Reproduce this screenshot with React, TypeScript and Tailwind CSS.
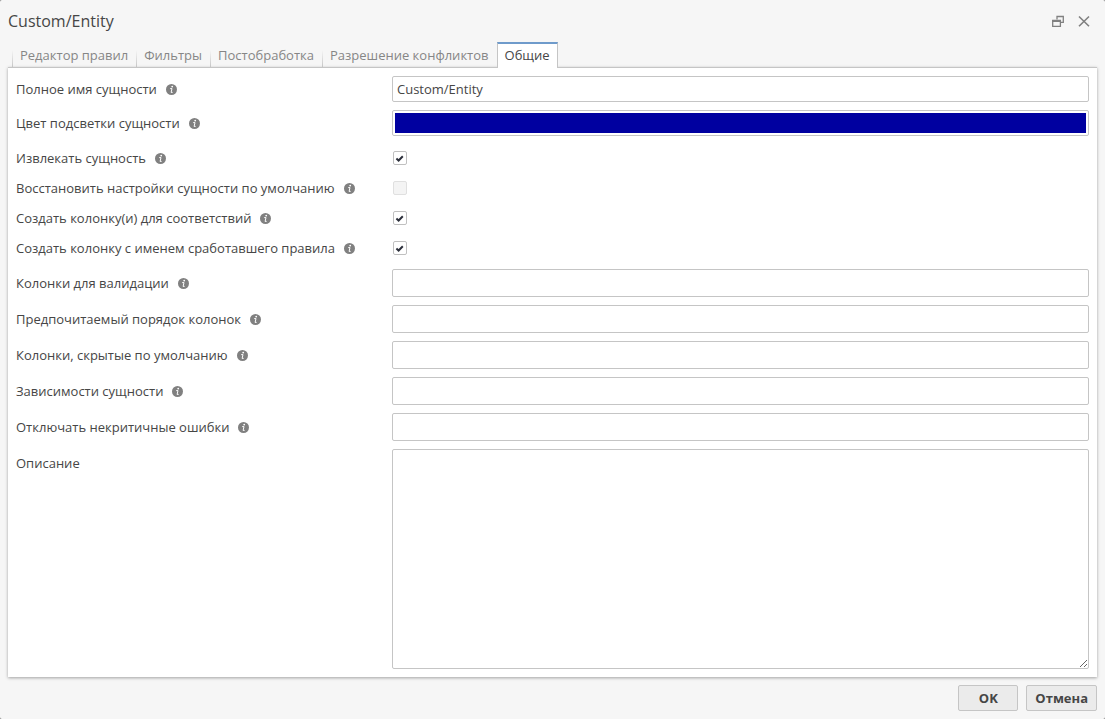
import { useState } from 'react';
import type { ReactNode } from 'react';

const tabs = [
  'Редактор правил',
  'Фильтры',
  'Постобработка',
  'Разрешение конфликтов',
  'Общие',
];

const checks = [
  { id: 'extract', label: 'Извлекать сущность', checked: true },
  {
    id: 'restore',
    label: 'Восстановить настройки сущности по умолчанию',
    checked: false,
    disabled: true,
  },
  { id: 'matches', label: 'Создать колонку(и) для соответствий', checked: true },
  {
    id: 'rule-name',
    label: 'Создать колонку с именем сработавшего правила',
    checked: true,
  },
];

const lists = [
  { id: 'validation', label: 'Колонки для валидации' },
  { id: 'order', label: 'Предпочитаемый порядок колонок' },
  { id: 'hidden', label: 'Колонки, скрытые по умолчанию' },
  { id: 'dependencies', label: 'Зависимости сущности' },
  { id: 'errors', label: 'Отключать некритичные ошибки' },
];

const field =
  'min-w-0 flex-1 rounded-xs border border-[#c5c5c5] bg-white outline-none focus:border-[#6f9bcb]';

function InfoIcon() {
  return (
    <svg viewBox="0 0 11 11" className="size-[11px] shrink-0" aria-hidden="true">
      <circle cx="5.5" cy="5.5" r="5.5" fill="#808080" />
      <circle cx="6.2" cy="2.6" r="0.9" fill="#fff" />
      <path
        d="M4.2 4.6H6L5.1 8.4H6.6"
        fill="none"
        stroke="#fff"
        strokeWidth="1"
        strokeLinejoin="round"
      />
    </svg>
  );
}

type RowProps = {
  id: string;
  label: string;
  info?: boolean;
  className?: string;
  children: ReactNode;
};

function Row({ id, label, info = true, className = 'items-center', children }: RowProps) {
  return (
    <div className={`flex ${className}`}>
      <div className="flex w-94 shrink-0 items-center gap-[9px]">
        <label htmlFor={id}>{label}</label>
        {info && <InfoIcon />}
      </div>
      {children}
    </div>
  );
}

type CheckboxProps = { id: string; checked: boolean; disabled?: boolean };

function Checkbox({ id, checked, disabled }: CheckboxProps) {
  return (
    <span className="ml-px grid size-3.5 place-items-center">
      <input
        id={id}
        type="checkbox"
        defaultChecked={checked}
        disabled={disabled}
        className="peer col-start-1 row-start-1 size-3.5 appearance-none rounded-xs border border-[#c0c0c0] bg-white disabled:border-[#e0e0e0] disabled:bg-[#f4f4f4]"
      />
      <svg
        viewBox="0 0 14 14"
        className="pointer-events-none invisible col-start-1 row-start-1 size-3.5 peer-checked:visible"
        aria-hidden="true"
      >
        <path d="M3.4 7.5L5.6 9.5L9.8 5.3" fill="none" stroke="#2b2f3a" strokeWidth="2" />
      </svg>
    </span>
  );
}

export default function App() {
  const [active, setActive] = useState('Общие');

  return (
    <div className="min-h-screen bg-[#808080]">
      <div className="flex min-h-screen flex-col rounded-xs bg-[#f6f6f6] px-2 pb-2 font-['Open_Sans',sans-serif] text-[13px] leading-5 text-[#464646]">
        <header className="flex h-[42px] items-center justify-between">
          <h1 className="text-base">Custom/Entity</h1>
          <div className="flex items-center gap-3.5 pr-[7px] text-[#808080]">
            <button type="button" aria-label="Восстановить">
              <svg viewBox="0 0 12 12" className="size-3" fill="none" stroke="currentColor">
                <path d="M5 4.5V1.5H11.3V7.3H9" strokeWidth="1.3" />
                <path d="M0.7 5.5H8.4V11.3H0.7Z" strokeWidth="1.3" />
                <path d="M0 6H9" strokeWidth="2" />
              </svg>
            </button>
            <button type="button" aria-label="Закрыть">
              <svg viewBox="0 0 12 12" className="size-3" fill="none" stroke="currentColor">
                <path d="M1 1.5L11 11.2M11 1.5L1 11.2" strokeWidth="1.6" />
              </svg>
            </button>
          </div>
        </header>

        <div role="tablist" className="z-10 -mb-px flex h-[26px] pl-1">
          {tabs.map((tab) =>
            tab === active ? (
              <button
                key={tab}
                type="button"
                role="tab"
                aria-selected="true"
                className="border-x border-t-2 border-x-[#c5c5c5] border-t-[#6f9bcb] bg-white px-[7px] pb-0.5"
              >
                {tab}
              </button>
            ) : (
              <button
                key={tab}
                type="button"
                role="tab"
                aria-selected="false"
                onClick={() => setActive(tab)}
                className="mb-px flex items-center pt-px pr-2 text-[#868686]"
              >
                <span className="mr-[7px] h-full w-px bg-linear-to-b from-transparent from-30% to-[#c5c5c5]" />
                {tab}
              </button>
            ),
          )}
        </div>

        <main className="flex flex-1 flex-col gap-2 border-t border-[#c5c5c5] bg-white p-2 shadow-[0_1px_3px_rgba(0,0,0,0.35)]">
          <Row id="name" label="Полное имя сущности">
            <input id="name" defaultValue="Custom/Entity" className={`${field} h-[26px] px-1`} />
          </Row>
          <Row id="color" label="Цвет подсветки сущности">
            <input
              id="color"
              type="color"
              defaultValue="#0000a0"
              className={`${field} h-[26px] appearance-none p-0.5 [&::-webkit-color-swatch]:rounded-none [&::-webkit-color-swatch]:border-0 [&::-webkit-color-swatch-wrapper]:p-0`}
            />
          </Row>
          <div className="flex flex-col gap-2.5 pt-1 pb-[3px]">
            {checks.map(({ id, label, checked, disabled }) => (
              <Row key={id} id={id} label={label}>
                <Checkbox id={id} checked={checked} disabled={disabled} />
              </Row>
            ))}
          </div>
          {lists.map(({ id, label }) => (
            <Row key={id} id={id} label={label}>
              <input id={id} className={`${field} h-7 px-1`} />
            </Row>
          ))}
          <Row
            id="description"
            label="Описание"
            info={false}
            className="flex-1 items-stretch [&>div]:h-7"
          >
            <textarea id="description" className={`${field} min-h-24 resize px-1`} />
          </Row>
        </main>

        <footer className="flex justify-end gap-2 pt-2 font-bold">
          <button
            type="button"
            className="h-[26px] min-w-15 rounded-xs border border-[#c5c5c5] bg-[#ebebeb] px-2"
          >
            OK
          </button>
          <button
            type="button"
            className="h-[26px] min-w-15 rounded-xs border border-[#c5c5c5] bg-[#ebebeb] px-2"
          >
            Отмена
          </button>
        </footer>
      </div>
    </div>
  );
}
